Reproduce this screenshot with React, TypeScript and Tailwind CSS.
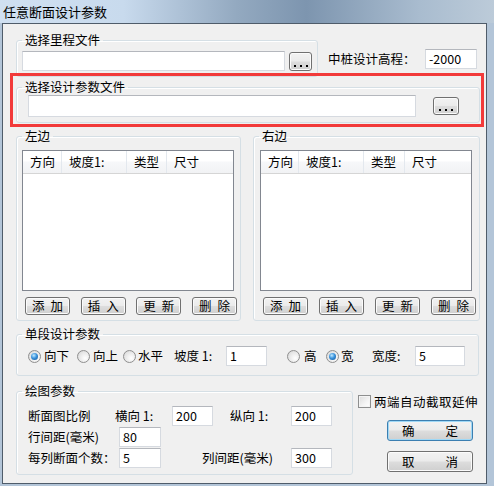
import React, { ReactNode } from 'react'

const FONT = "font-['Noto_Sans_CJK_SC','Liberation_Sans',sans-serif]"

function GroupBox({ label, className = '', children }: { label: string; className?: string; children: ReactNode }) {
  return (
    <fieldset className={`border border-[#d5dfe5] rounded-[3px] pl-[5px] shadow-[inset_1px_1px_0_#fff] ${className}`}>
      <legend className="px-[3px] leading-[16px]">{label}</legend>
      {children}
    </fieldset>
  )
}

function TextBox({ value = '', className = '' }: { value?: string; className?: string }) {
  return (
    <div
      className={`bg-white border border-[#d6dae0] border-t-[#b4b7bd] flex items-center pl-[3px] leading-[16px] ${className}`}
    >
      {value}
    </div>
  )
}

function WinButton({ children, className = '', isDefault = false }: { children: ReactNode; className?: string; isDefault?: boolean }) {
  return (
    <button
      type="button"
      className={`rounded-[3px] border flex items-center justify-center leading-[16px] bg-[linear-gradient(#f2f2f2_0%,#ebebeb_48%,#dddddd_52%,#cfcfcf_100%)] ${
        isDefault
          ? 'border-[#3c7fb1] shadow-[inset_0_0_0_1px_#9fd8f6]'
          : 'border-[#707070] shadow-[inset_0_0_0_1px_#fbfbfb]'
      } ${className}`}
    >
      {children}
    </button>
  )
}

function BrowseButton({ className = '' }: { className?: string }) {
  return (
    <WinButton className={`items-end pb-[3px] gap-[4px] ${className}`}>
      <span className="w-[2px] h-[2px] bg-black" />
      <span className="w-[2px] h-[2px] bg-black" />
      <span className="w-[2px] h-[2px] bg-black" />
    </WinButton>
  )
}

function Radio({ checked = false }: { checked?: boolean }) {
  return (
    <span className="w-[13px] h-[13px] shrink-0 rounded-full border border-[#8f8f8f] bg-[radial-gradient(circle_at_65%_65%,#ffffff_0%,#e6e6e6_60%,#cfcfcf_100%)] flex items-center justify-center">
      {checked && (
        <span className="w-[7px] h-[7px] rounded-full bg-[radial-gradient(circle_at_40%_35%,#c4ebff_0%,#3a93dd_45%,#124f8e_100%)]" />
      )}
    </span>
  )
}

function ListView({ cols }: { cols: number[] }) {
  const heads = ['方向', '坡度1:', '类型', '尺寸']
  return (
    <div className="w-[212px] h-[141px] bg-white border border-[#828790] flex flex-col">
      <div className="h-[23px] flex border-b border-[#d5d5d5] bg-[linear-gradient(#ffffff_0%,#ffffff_45%,#f7f8fa_50%,#f1f2f4_100%)]">
        {heads.map((h, i) => (
          <div
            key={h}
            className={`h-full flex items-center pl-[7px] leading-[16px] ${i < 3 ? 'border-r border-[#e3e8ee]' : 'flex-1'}`}
            style={i < 3 ? { width: cols[i] } : undefined}
          >
            {h}
          </div>
        ))}
      </div>
    </div>
  )
}

function ListButtons() {
  const labels = [['添', '加'], ['插', '入'], ['更', '新'], ['删', '除']]
  return (
    <div className="flex justify-between px-[3px] mt-[6px]">
      {labels.map(([a, b]) => (
        <WinButton key={a} className="w-[45px] h-[18px] gap-[6px]">
          <span>{a}</span>
          <span>{b}</span>
        </WinButton>
      ))}
    </div>
  )
}

export default function App() {
  return (
    <div className={`w-[494px] h-[486px] overflow-hidden flex flex-col bg-[#b3c5d8] text-black text-[12.5px] ${FONT}`}>
      {/* title bar */}
      <div className="h-[23px] shrink-0 flex items-center pl-[3px] bg-[linear-gradient(90deg,#d0e0f1_0%,#c8daed_25%,#93a9c0_48%,#7d95af_62%,#a9bccf_85%,#bccbd9_100%)]">
        <span className="leading-[16px] text-[13px]">任意断面设计参数</span>
      </div>

      <div className="flex-1 flex pl-[2px] pr-[7px] pb-[2px]">
        <div className="flex-1 bg-[#f0f0f0] border border-[#4f5c6a] flex flex-col pl-[13px]">
          {/* mileage file row */}
          <div className="flex items-start mt-[8px]">
            <GroupBox label="选择里程文件" className="w-[302px] pb-[5px]">
              <div className="flex items-center mt-[3px]">
                <TextBox className="w-[263px] h-[20px] border-[#a9c8e4] border-t-[#8fb4d9]" />
                <BrowseButton className="w-[23px] h-[19px] ml-[4px]" />
              </div>
            </GroupBox>
            <div className="flex items-center mt-[17px] ml-[10px]">
              <span className="w-[97px] leading-[16px]">中桩设计高程：</span>
              <TextBox value="-2000" className="w-[52px] h-[20px]" />
            </div>
          </div>

          {/* highlighted parameter file box */}
          <div className="relative w-[474px] -mt-[4px] -ml-[6px] border-[3px] border-[#f23a3a] pb-[1px]">
            <GroupBox label="选择设计参数文件" className="w-[464px] ml-[3px] mt-[3px] pb-[5px]">
              <div className="flex items-center pl-[6px]">
                <TextBox className="w-[388px] h-[22px]" />
                <BrowseButton className="w-[26px] h-[18px] ml-[17px]" />
              </div>
            </GroupBox>
          </div>

          {/* left / right tables */}
          <div className="flex mt-[1px]">
            <GroupBox label="左边" className="w-[225px] pb-[5px]">
              <div className="mt-[6px]">
                <ListView cols={[39, 65, 40]} />
              </div>
              <ListButtons />
            </GroupBox>
            <GroupBox label="右边" className="w-[227px] ml-[12px] pb-[5px]">
              <div className="mt-[6px] pl-[1px]">
                <ListView cols={[38, 65, 41]} />
              </div>
              <div className="pl-[1px]">
                <ListButtons />
              </div>
            </GroupBox>
          </div>

          {/* single segment */}
          <GroupBox label="单段设计参数" className="w-[463px] mt-[5px] pb-[9px]">
            <div className="flex items-center mt-[4px] pl-[6px] h-[20px]">
              <Radio checked />
              <span className="ml-[3px] w-[25px]">向下</span>
              <span className="ml-[8px]"><Radio /></span>
              <span className="ml-[3px] w-[25px]">向上</span>
              <span className="ml-[5px]"><Radio /></span>
              <span className="ml-[2px] w-[25px]">水平</span>
              <span className="ml-[11px] w-[52px]">坡度 1:</span>
              <TextBox value="1" className="w-[41px] h-[20px]" />
              <span className="ml-[20px]"><Radio /></span>
              <span className="ml-[4px] w-[13px]">高</span>
              <span className="ml-[9px]"><Radio checked /></span>
              <span className="ml-[2px] w-[13px]">宽</span>
              <span className="ml-[18px] w-[43px]">宽度:</span>
              <TextBox value="5" className="w-[50px] h-[20px]" />
            </div>
          </GroupBox>

          {/* drawing params + actions */}
          <div className="flex items-start mt-[7px]">
            <GroupBox label="绘图参数" className="w-[337px] pb-[6px]">
              <div className="flex flex-col gap-[1px] mt-[7px] pl-[6px]">
                <div className="flex items-center h-[20px]">
                  <span className="w-[87px]">断面图比例</span>
                  <span className="w-[57px]">横向 1:</span>
                  <TextBox value="200" className="w-[41px] h-[20px]" />
                  <span className="ml-[17px] w-[61px]">纵向 1:</span>
                  <TextBox value="200" className="w-[41px] h-[20px]" />
                </div>
                <div className="flex items-center h-[20px]">
                  <span className="w-[91px]">行间距(毫米)</span>
                  <TextBox value="80" className="w-[42px] h-[20px]" />
                </div>
                <div className="flex items-center h-[20px]">
                  <span className="w-[91px]">每列断面个数：</span>
                  <TextBox value="5" className="w-[42px] h-[20px]" />
                  <span className="ml-[41px] w-[89px]">列间距(毫米)</span>
                  <TextBox value="300" className="w-[41px] h-[20px]" />
                </div>
              </div>
            </GroupBox>

            <div className="flex flex-col ml-[5px] mt-[12px]">
              <div className="flex items-center h-[13px]">
                <span className="w-[13px] h-[13px] border border-[#8e8f8f] bg-[linear-gradient(135deg,#dcdcdc_0%,#f4f4f4_60%,#ffffff_100%)] shadow-[inset_0_0_0_1px_#f4f4f4]" />
                <span className="ml-[3px] leading-[16px] tracking-[0.5px]">两端自动截取延伸</span>
              </div>
              <WinButton isDefault className="w-[86px] h-[21px] ml-[29px] mt-[12px] gap-[31px]">
                <span>确</span>
                <span>定</span>
              </WinButton>
              <WinButton className="w-[86px] h-[21px] ml-[29px] mt-[10px] gap-[31px]">
                <span>取</span>
                <span>消</span>
              </WinButton>
            </div>
          </div>
        </div>
      </div>
    </div>
  )
}
